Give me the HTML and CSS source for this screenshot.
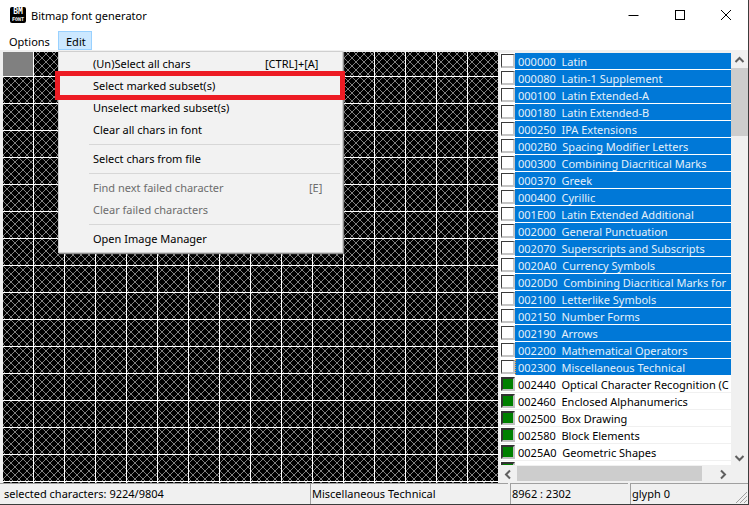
FILE: index.html
```html
<!DOCTYPE html>
<html lang="en">
<head>
<meta charset="utf-8">
<title>Bitmap font generator</title>
<link rel="stylesheet" href="styles.css">
</head>
<body>
<div class="window">
  <header class="titlebar">
    <div class="appicon"><span>BM</span><span class="appicon-small">FONT</span></div>
    <div class="title">Bitmap font generator</div>
    <div class="controls">
      <svg class="ctl" width="46" height="30" viewBox="0 0 46 30"><path d="M17.5 15.5h10" stroke="#000" fill="none"/></svg>
      <svg class="ctl" width="46" height="30" viewBox="0 0 46 30"><rect x="18.5" y="10.5" width="9" height="9" stroke="#000" fill="none"/></svg>
      <svg class="ctl" width="46" height="30" viewBox="0 0 46 30"><path d="M18 10l10 10M28 10l-10 10" stroke="#000" fill="none"/></svg>
    </div>
  </header>
  <nav class="menubar">
    <div class="menuitem">Options</div>
    <div class="menuitem menuitem-open">Edit</div>
  </nav>
  <main class="main">
    <div class="canvas">
      <svg class="charmap" width="495" height="431">
        <defs>
          <pattern id="hatch" width="8" height="8" patternUnits="userSpaceOnUse">
            <rect width="8" height="8" fill="#000"/>
            <path d="M0 0h1v1h-1zM7 0h1v1h-1zM1 1h1v1h-1zM6 1h1v1h-1zM2 2h1v1h-1zM5 2h1v1h-1zM3 3h2v2h-2zM2 5h1v1h-1zM5 5h1v1h-1zM1 6h1v1h-1zM6 6h1v1h-1zM0 7h1v1h-1zM7 7h1v1h-1z" fill="#808080" shape-rendering="crispEdges"/>
          </pattern>
          <pattern id="cell" x="0" y="-2" width="31" height="27" patternUnits="userSpaceOnUse">
            <rect width="31" height="27" fill="#fff"/>
            <rect width="30" height="26" fill="url(#hatch)"/>
          </pattern>
        </defs>
        <rect width="495" height="431" fill="url(#cell)"/>
        <rect width="30" height="24" fill="#808080"/>
      </svg>
    </div>
    <div class="subsets">
      <div class="listarea">
        <ul class="list">
          <li class="row sel"><i class="check"></i><span class="label">000000  Latin</span></li>
          <li class="row sel"><i class="check"></i><span class="label">000080  Latin-1 Supplement</span></li>
          <li class="row sel"><i class="check"></i><span class="label">000100  Latin Extended-A</span></li>
          <li class="row sel"><i class="check"></i><span class="label">000180  Latin Extended-B</span></li>
          <li class="row sel"><i class="check"></i><span class="label">000250  IPA Extensions</span></li>
          <li class="row sel"><i class="check"></i><span class="label">0002B0  Spacing Modifier Letters</span></li>
          <li class="row sel"><i class="check"></i><span class="label">000300  Combining Diacritical Marks</span></li>
          <li class="row sel"><i class="check"></i><span class="label">000370  Greek</span></li>
          <li class="row sel"><i class="check"></i><span class="label">000400  Cyrillic</span></li>
          <li class="row sel"><i class="check"></i><span class="label">001E00  Latin Extended Additional</span></li>
          <li class="row sel"><i class="check"></i><span class="label">002000  General Punctuation</span></li>
          <li class="row sel"><i class="check"></i><span class="label">002070  Superscripts and Subscripts</span></li>
          <li class="row sel"><i class="check"></i><span class="label">0020A0  Currency Symbols</span></li>
          <li class="row sel"><i class="check"></i><span class="label">0020D0  Combining Diacritical Marks for</span></li>
          <li class="row sel"><i class="check"></i><span class="label">002100  Letterlike Symbols</span></li>
          <li class="row sel"><i class="check"></i><span class="label">002150  Number Forms</span></li>
          <li class="row sel"><i class="check"></i><span class="label">002190  Arrows</span></li>
          <li class="row sel"><i class="check"></i><span class="label">002200  Mathematical Operators</span></li>
          <li class="row sel focus"><i class="check"></i><span class="label">002300  Miscellaneous Technical</span></li>
          <li class="row"><i class="check on"></i><span class="label">002440  Optical Character Recognition (C</span></li>
          <li class="row"><i class="check on"></i><span class="label">002460  Enclosed Alphanumerics</span></li>
          <li class="row"><i class="check on"></i><span class="label">002500  Box Drawing</span></li>
          <li class="row"><i class="check on"></i><span class="label">002580  Block Elements</span></li>
          <li class="row"><i class="check on"></i><span class="label">0025A0  Geometric Shapes</span></li>
          <li class="row"><i class="check on"></i><span class="label"></span></li>
        </ul>
        <div class="vscroll">
          <svg width="17" height="16" viewBox="0 0 17 16"><path d="M4.5 10l4-4 4 4" fill="none" stroke="#606060" stroke-width="2"/></svg>
          <div class="vtrack"><div class="vthumb"></div></div>
          <svg width="17" height="16" viewBox="0 0 17 16"><path d="M4.5 6l4 4 4-4" fill="none" stroke="#606060" stroke-width="2"/></svg>
        </div>
      </div>
      <div class="hscroll">
        <svg width="17" height="17" viewBox="0 0 17 17"><path d="M10 4.5l-4 4 4 4" fill="none" stroke="#606060" stroke-width="2"/></svg>
        <div class="htrack"><div class="hthumb"></div></div>
        <svg width="17" height="17" viewBox="0 0 17 17"><path d="M7 4.5l4 4-4 4" fill="none" stroke="#606060" stroke-width="2"/></svg>
      </div>
    </div>
  </main>
  <footer class="status">
    <div class="pane pane-first">selected characters: 9224/9804</div>
    <div class="pane pane-name">Miscellaneous Technical</div>
    <div class="pane pane-pos">8962 : 2302</div>
    <div class="pane pane-glyph">glyph 0</div>
    <svg class="grip" width="14" height="14" viewBox="0 0 14 14"><path d="M13 2L2 13M13 6l-7 7M13 10l-3 3" stroke="#a0a0a0" fill="none"/></svg>
  </footer>

  <div class="dropdown">
    <div class="dd-item"><span>(Un)Select all chars</span><span class="dd-key">[CTRL]+[A]</span></div>
    <div class="dd-item"><span>Select marked subset(s)</span></div>
    <div class="dd-item"><span>Unselect marked subset(s)</span></div>
    <div class="dd-item"><span>Clear all chars in font</span></div>
    <div class="dd-sep"></div>
    <div class="dd-item"><span>Select chars from file</span></div>
    <div class="dd-sep"></div>
    <div class="dd-item dd-off"><span>Find next failed character</span><span class="dd-key dd-key-e">[E]</span></div>
    <div class="dd-item dd-off"><span>Clear failed characters</span></div>
    <div class="dd-sep"></div>
    <div class="dd-item"><span>Open Image Manager</span></div>
  </div>
  <div class="callout"></div>
</div>
</body>
</html>
```
FILE: styles.css
```css
* { box-sizing: border-box; }
html, body { margin: 0; padding: 0; }
body { width: 749px; height: 505px; overflow: hidden; background: #f0f0f0; }
.window {
  position: relative;
  width: 749px;
  height: 505px;
  display: flex;
  flex-direction: column;
  background: #f0f0f0;
  font: 11px/16px "Noto Sans", "Open Sans", sans-serif;
  color: #000;
  border-right: 1px solid #3c3c3c;
  border-bottom: 1px solid #3c3c3c;
  overflow: hidden;
}
.titlebar { height: 30px; display: flex; align-items: center; background: #fff; padding-left: 10px; flex: none; }
.appicon {
  width: 16px; height: 16px; background: #000; border-radius: 2px; color: #fff;
  display: flex; flex-direction: column; align-items: center;
  font: bold 8px/9px "DejaVu Sans Mono", monospace;
  overflow: hidden;
}
.appicon-small { font-size: 5px; line-height: 6px; }
.title { margin-left: 5px; flex: 1; padding-top: 2px; }
.controls { display: flex; margin-right: -1px; }
.ctl { display: block; }
.menubar { height: 21px; display: flex; background: #fff; padding-top: 1px; flex: none; border-bottom: 1px solid #f0f0f0; }
.menuitem { padding: 0 7px 0 9px; height: 19px; line-height: 20px; border: 1px solid transparent; margin-right: -1px; }
.menuitem:first-child { padding-left: 8px; width: 59px; }
.menuitem-open { background: #cce8ff; border-color: #99d1ff; width: 34px; padding: 0 0 0 7px; }
.main { flex: 1; display: flex; min-height: 0; padding: 1px 0 0 3px; }
.canvas { width: 495px; height: 431px; flex: none; }
.charmap { display: block; }
.subsets { width: 248px; margin-left: 2px; flex: none; display: flex; flex-direction: column; }
.listarea { flex: 1; display: flex; min-height: 0; }
.list { list-style: none; margin: 1px 0 0; padding: 0; width: 231px; height: 412px; background: #fff; overflow: hidden; flex: none; }
.row { height: 17px; display: flex; border-bottom: 1px solid #f0f0f0; white-space: nowrap; overflow: hidden; padding-left: 1px; }
.check {
  width: 14px; height: 14px; flex: none; margin-top: 1px; background: #fff;
  border: solid; border-width: 1px 2px 2px 1px; border-color: #3c3c3c #c4c4c4 #c4c4c4 #3c3c3c;
}
.check.on {
  border-width: 2px; border-color: #333 #c0c0c0 #c0c0c0 #333;
  background: #008000;
}
.label { flex: 1; padding-left: 3px; white-space: pre; overflow: hidden; line-height: 17px; }
.sel { border-bottom-color: #fff; }
.sel .label { background: #0078d7; color: #e4f0fa; }
.focus .label { border-left: 1px dotted #f0a040; padding-left: 2px; }
.vscroll { width: 17px; flex: none; display: flex; flex-direction: column; background: #f0f0f0; }
.vscroll svg, .hscroll svg { display: block; flex: none; }
.vtrack { flex: 1; }
.vthumb { width: 17px; height: 68px; background: #cdcdcd; }
.hscroll { height: 17px; display: flex; flex: none; width: 231px; }
.htrack { flex: 1; }
.hthumb { width: 185px; height: 15px; background: #cdcdcd; }
.status { position: relative; height: 21px; display: flex; flex: none; background: #f0f0f0; }
.pane { border-top: 1px solid #a0a0a0; border-left: 1px solid #a0a0a0; padding: 2px 0 0 1px; white-space: nowrap; }
.pane-first { border-left: 0; width: 310px; padding-left: 4px; }
.pane-name { width: 198px; }
.pane-pos { width: 118px; margin-left: 2px; }
.pane-glyph { flex: 1; margin-left: 2px; }
.grip { position: absolute; right: 0; bottom: 0; }

.dropdown {
  position: absolute; left: 58px; top: 51px; width: 285px; height: 202px;
  background: #f2f2f2; border: 1px solid #cfcfcf; padding: 1px 2px;
  box-shadow: 1px 1px 1px #8c8c8c;
  display: flex; flex-direction: column;
}
.dd-item { height: 22px; flex: none; display: flex; padding-left: 32px; line-height: 22px; position: relative; }
.dd-key { position: absolute; left: 204px; }
.dd-key-e { left: 248px; }
.dd-off { color: #6d6d6d; }
.dd-sep { height: 7px; flex: none; margin-left: 28px; border-bottom: 1px solid #d7d7d7; padding: 0; position: relative; top: -3px; }
.callout { position: absolute; left: 55px; top: 71px; width: 290px; height: 29px; border: 5px solid #ed1c24; }
```
